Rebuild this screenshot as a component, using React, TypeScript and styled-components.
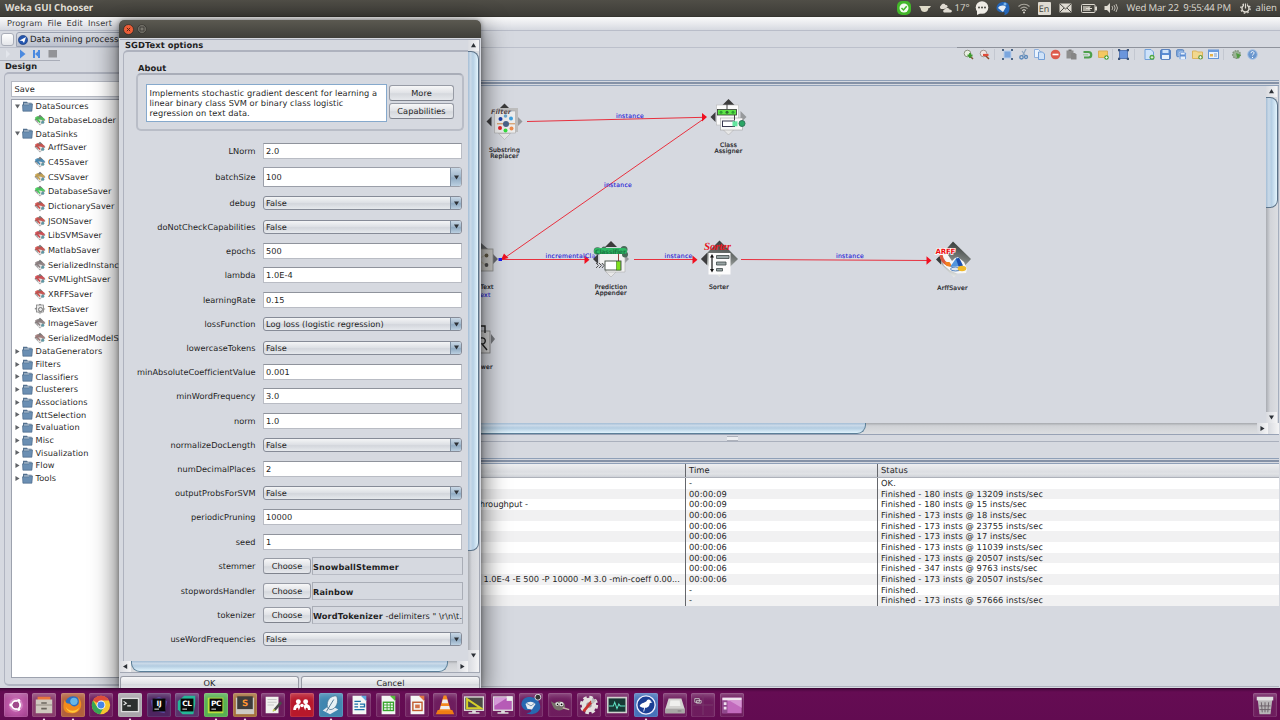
import React from "react";
import styled, { createGlobalStyle, css } from "styled-components";

const Global = createGlobalStyle`
  html, body { margin: 0; padding: 0; overflow: hidden; }
  * { box-sizing: border-box; }
  body { font: 8.2px/10px "DejaVu Sans", sans-serif; color: #1f1f1f; text-rendering: geometricPrecision; letter-spacing: 0.05px; }
  svg { display: block; flex: none; }
`;

const Screen = styled.div`
  position: relative; width: 1280px; height: 720px; display: flex; flex-direction: column;
  background: #d6d9e0; overflow: hidden; white-space: nowrap;
`;

/* ---------- desktop top panel ---------- */
const TopPanel = styled.header`
  height: 17px; flex: none; display: flex; align-items: center; justify-content: space-between;
  padding: 0 3px 0 5px; background: linear-gradient(#504e47, #3d3c37); border-bottom: 1px solid #35342f;
  color: #dfdbd2; font-family: "Open Sans", sans-serif; font-size: 9.6px; letter-spacing: 0;
`;
const PanelTitle = styled.div` font-weight: 700; font-size: 9.7px; letter-spacing: -0.05px; `;
const Indicators = styled.div` display: flex; align-items: center; height: 16px; `;
const Indicator = styled.span<{ $w: number }>`
  width: ${p => p.$w}px; flex: none; display: flex; align-items: center; gap: 2px;
`;
const Clock = styled.span` white-space: pre; letter-spacing: -0.18px; `;
const Lang = styled.span`
  width: 13px; height: 13px; background: #dfdbd2; color: #4a4943; border-radius: 1px;
  font-size: 9px; line-height: 13px; text-align: center;
`;

/* ---------- main window chrome ---------- */
const MenuBar = styled.nav`
  height: 14px; flex: none; display: flex; gap: 5px; padding: 1px 7px 0; color: #3b3b3b; letter-spacing: 0.12px;
  background: linear-gradient(#fafafa, #e9eaee 50%, #d6d9e0); border-bottom: 1px solid #b9bdc9;
`;
const TabRow = styled.div`
  height: 17px; flex: none; display: flex; align-items: center; gap: 2px; padding-left: 1px;
  border-bottom: 1px solid #bcc0cb;
`;
const CornerButton = styled.div`
  width: 13px; height: 13px; margin-top: 1px; background: linear-gradient(#fff, #e4e6ea); border: 1px solid #a9adb8; border-radius: 3px;
`;
const Tab = styled.div`
  height: 15px; width: 400px; display: flex; align-items: center; gap: 2px; padding-left: 1px; padding-top: 2px; font-size: 8.5px;
  background: linear-gradient(#d9dce3, #bcc1ce); border: 1px solid #9ca3b3; border-radius: 3px 0 0 0;
`;
const ToolRow = styled.div` height: 32px; flex: none; display: flex; align-items: flex-start; justify-content: space-between; `;
const PlayTools = styled.div`
  width: 60px; height: 13px; display: flex; align-items: center; border-bottom: 1px solid #a9adb8; padding-left: 5px;
`;
const EditTools = styled.div`
  width: 323px; height: 14px; display: flex; align-items: center; padding-left: 3px; margin-top: -1px;
  border-top: 1px solid #8f939c;
`;
const ToolCell = styled.span` width: 16px; height: 13px; display: grid; place-items: center; `;
const ToolGap = styled.span<{ $w: number }>`
  width: ${p => p.$w}px; height: 11px; background: linear-gradient(#c3c7d0, #c3c7d0) 30% 0 / 1px 100% no-repeat;
`;
const Body = styled.div` height: 608px; flex: none; display: flex; `;

/* ---------- design sidebar ---------- */
const Sidebar = styled.aside` width: 120px; flex: none; display: flex; flex-direction: column; margin-top: -19px; `;
const SideTitle = styled.div` font-weight: 700; padding-left: 5px; height: 11px; line-height: 10px; `;
const SideGroup = styled.div`
  flex: none; height: 614px; margin-left: 4px; padding: 7px 0 6px 6px; border: 1px solid #b1b5c1; border-width: 2px 0 2px 1px;
  border-radius: 5px 0 0 5px; display: flex; flex-direction: column; gap: 2px;
`;
const Search = styled.div`
  height: 16px; flex: none; background: #fff; border: 1px solid #b5b9c3; padding: 2px 2.5px; border-right: 0;
`;
const Tree = styled.div` flex: 1; background: #fff; border: 1px solid #9da2ae; border-right: 0; overflow: hidden; `;
const Folder = styled.div`
  height: 12.67px; display: flex; align-items: center; padding-left: 2.5px; gap: 2.5px; color: #2b2b2b; letter-spacing: 0.1px;
  & > svg:first-child { opacity: 0.75; }
`;
const Leaf = styled.div`
  height: 14.67px; display: flex; align-items: center; padding-left: 21.5px; gap: 2.5px; color: #2b2b2b; letter-spacing: 0.06px;
`;

/* ---------- flow canvas ---------- */
const Content = styled.main` flex: 1; min-width: 0; display: flex; flex-direction: column; padding-right: 1px; `;
const Rule = styled.div`
  height: 6px; flex: none; border-top: 1px solid #8fa0b8; border-bottom: 1px solid #8fa0b8;
  background: linear-gradient(#d6d9e0 1px, #8592a7 1px, #8592a7 3px, #d6d9e0 3px);
`;
const CanvasRow = styled.div` height: 337px; flex: none; display: flex; border-right: 1px solid #a5aebd; `;
const VBar = styled.div<{ $w: number }>`
  width: ${p => p.$w}px; flex: none; display: flex; flex-direction: column; background: linear-gradient(90deg, #a9acb2, #d2d4d9 35%, #dcdee2);
`;
const VThumb = styled.div<{ $h: number }>`
  height: ${p => p.$h}px; border: 1px solid #5b7288; border-left: 0; border-radius: 0 8px 8px 0;
  background: linear-gradient(90deg, #a4bdd5, #c9d9e8 25%, #b6cfe4 50%, #e3f4fd);
`;
const ArrowBox = styled.div`
  width: 11px; height: 11px; flex: none; background: linear-gradient(90deg, #d9dbe0, #f4f4f5); display: grid; place-items: center;
`;
const Spacer = styled.div` flex: 1; `;
const HBar = styled.div`
  height: 11px; flex: none; display: flex; align-items: stretch; background: linear-gradient(#a5a8ad, #cfd1d5 25%, #dcdee1);
`;
const HThumb = styled.div<{ $w: number; $both?: boolean }>`
  width: ${p => p.$w}px; border: 1px solid #5b7f98; border-top: 0;
  border-radius: ${p => (p.$both ? "0 0 9px 9px" : "0 0 9px 0")};
  background: linear-gradient(#a4bdd5, #c9d9e8 25%, #b3cce1 50%, #e0f3fc);
`;
const Splitter = styled.div`
  height: 8px; flex: none; border-top: 1px solid #98a2b5; border-bottom: 1px solid #aab0bd; display: flex; padding: 1px 0 0 607px;
  &::after { content: ""; width: 11px; height: 3px; border: solid #adb1bb; border-width: 1px 0; background: #eceef1; }
`;
const StatusHead = styled.div` height: 16px; flex: none; `;

/* ---------- status table ---------- */
const Table = styled.div` flex: none; display: flex; flex-direction: column; `;
const Row = styled.div<{ $odd?: boolean; $head?: boolean }>`
  display: grid; grid-template-columns: 565.5px 192px 1fr; height: 10.67px; line-height: 10.3px;
  background: ${p => (p.$odd ? "#f1f1f2" : "#ffffff")}; font-size: 8.3px; letter-spacing: 0.08px;
  ${p => p.$head && css`
    height: 14px; line-height: 12px; background: linear-gradient(#eeeff1, #dcdee2 60%, #e1e3e6 75%, #cfd2d8);
    border-bottom: 1px solid #aeb2ba;
  `}
`;
const Cell = styled.div`
  border-right: 1px solid #65676c; padding-left: 3.5px; overflow: hidden;
  &:last-child { border-right: 0; }
`;
const Task = styled(Cell)` padding-left: 0; padding-right: 5px; display: flex; `;
const TaskText = styled.span<{ $left: number }>` padding-left: ${p => p.$left}px; letter-spacing: -0.04px; `;
const Remaining = styled.div` height: 81.5px; flex: none; border-bottom: 1px solid #b0b4bf; `;

/* ---------- options dialog ---------- */
const Dialog = styled.section`
  position: absolute; left: 119px; top: 20px; width: 362px; height: 668px; display: flex; flex-direction: column;
  background: #d6d9e0; border-radius: 5px 5px 0 0; overflow: hidden; padding: 0 1px;
`;
const DialogShadow = styled.div`
  position: absolute; left: 119px; top: 20px; width: 362px; height: 668px; border-radius: 5px 5px 0 0;
  box-shadow: 0 0 5px rgba(0, 0, 0, 0.4), 0 8px 26px 2px rgba(0, 0, 0, 0.6);
`;
const DialogBar = styled.div`
  height: 18px; flex: none; background: linear-gradient(#5b5951, #3f3e39); display: flex; align-items: center;
  margin: 0 -1px; padding-left: 4px; gap: 2.5px;
`;
const ScrollPane = styled.div` height: 634px; flex: none; border: 1px solid #a3a8b4; border-left-width: 0; display: flex; flex-direction: column; margin-top: 1px; `;
const PaneTop = styled.div` display: flex; height: 621px; `;
const Form = styled.div` flex: 1; padding: 0 0 0 3px; `;
const Title = styled.div` height: 10px; line-height: 11px; font-weight: 700; padding-left: 2px; font-size: 8.35px; `;
const Group = styled.div`
  height: 611px; border: solid #aeb2be; border-width: 2px 0 0 1px; border-radius: 5px 0 0 0; padding: 10px 0 0 12px;
`;
const AboutTitle = styled.div` font-weight: 700; height: 11px; line-height: 12px; padding-left: 2px; font-size: 8.35px; `;
const AboutBox = styled.div`
  width: 328px; height: 58px; border: 2px solid #b9bdc7; border-top-color: #a9adb8; border-radius: 5px; padding: 9px 8px; display: flex; gap: 2px;
`;
const Description = styled.div`
  width: 241px; height: 38px; background: #fff; border: 1.5px solid #86a9cc; padding: 3px 2.5px; white-space: pre; line-height: 10px; font-size: 8.25px;
  letter-spacing: 0.07px;
`;
const ButtonStack = styled.div` display: flex; flex-direction: column; gap: 2.5px; padding-top: 0.5px; `;
const Button = styled.div<{ $w: number; $h: number }>`
  width: ${p => p.$w}px; height: ${p => p.$h}px; line-height: ${p => p.$h - 2}px; flex: none; text-align: center; border: 1px solid #979ba5; border-bottom-color: #7f838d;
  border-radius: 3px; background: linear-gradient(#f7f7f8, #e0e2e6 50%, #d5d8dd 55%, #e6e8ec);
`;
const Fields = styled.div` padding-top: 7.9px; `;
const Field = styled.div<{ $h: number }>` height: ${p => p.$h}px; display: flex; align-items: center; `;
const Label = styled.label` width: 119.5px; text-align: right; margin-right: 7.5px; flex: none; letter-spacing: 0.03px; `;
const Input = styled.div`
  width: 199px; height: 16px; line-height: 14px; background: #fff; border: 1px solid #b9bcc4; border-top-color: #8f939c; padding-left: 2px;
`;
const Combo = styled.div<{ $editable?: boolean }>`
  width: 199px; height: 14px; display: flex; justify-content: space-between; line-height: 12px; padding-left: 2px;
  border: 1px solid #868b97; border-radius: 3px; background: linear-gradient(#f4f5f6, #dcdfe4 50%, #d3d6dc 55%, #e6e9ed); overflow: hidden;
  ${p => p.$editable && css`height: 20px; line-height: 18px; background: #fff; border-color: #9b9fa9; border-radius: 0 3px 3px 0;`}
`;
const Drop = styled.div`
  width: 11px; border-left: 1px solid #7d8fa3; background: linear-gradient(#c9d8e6, #9fb6cb 50%, #8faac2 55%, #bcd0e1);
  display: grid; place-items: center;
`;
const Chosen = styled.div`
  width: 151px; height: 18px; line-height: 18px; margin-left: 1px; border: 1px solid #a9adb6; border-bottom-color: #b9bcc5; overflow: hidden;
  b { letter-spacing: 0.13px; }
`;
const DialogButtons = styled.div` display: flex; gap: 2px; padding-top: 3px; height: 15px; overflow: hidden; `;

/* ---------- dock ---------- */
const Dock = styled.footer`
  height: 32px; flex: none; position: relative; z-index: 1; display: flex; align-items: flex-start; gap: 4.67px; padding: 4px 3.5px 0;
  background: linear-gradient(#4c0840, #650c53 3px, #620b51); border-top: 1px solid #3f0636; margin-top: auto;
`;
const Tile = styled.div<{ $bg: string; $run?: boolean }>`
  width: 24px; height: 24px; flex: none; position: relative; border-radius: 2px; display: grid; place-items: center; background: ${p => p.$bg};
  box-shadow: inset 0 0 0 0.6px rgba(255, 255, 255, 0.16), inset 0 5px 6px -3px rgba(255, 255, 255, 0.3);
  ${p => p.$run && css`
    &::after { content: ""; position: absolute; left: 10px; bottom: -4px; border: 2px solid transparent; border-bottom: 3px solid #f0e6ee; border-top: 0; }
  `}
`;
const Push = styled.div` flex: 1; `;

const Arrow = ({ dir }: { dir: "up" | "down" | "left" | "right" }) => {
  const d = { up: "M0 5 3 0 6 5Z", down: "M0 .5 6 .5 3 5.5Z", left: "M5 0 5 6 0 3Z", right: "M.5 0 5.5 3 .5 6Z" }[dir];
  return <svg width="5" height="5" viewBox="0 0 6 6"><path d={d} fill="#2c3036" /></svg>;
};

const FolderIcon = () => (
  <svg width="11" height="11" viewBox="0 0 11 11">
    <path d="M1 .8h4l.8 1H9.500V9H1z" fill="#54718f" /><path d="M2 2.500h7v5H2z" fill="#d6e2ec" />
    <path d="M.5 3.800h6l1-.9h3L9.900 10.200H.9z" fill="#6b8fb3" stroke="#41607f" strokeWidth=".6" />
  </svg>
);

const LeafIcon = ({ c, kind }: { c: string; kind?: string }) => (
  <svg width="12" height="12" viewBox="0 0 12 12">
    <path d="M6 .8 11.500 6 6 11.400.5 6Z" fill={kind === "text" ? "#c4c4c4" : "#a5a5a5"} />
    <path d="M6 .8 9 3.500 3 6 .5 6Z" fill="#6a6a6a" opacity=".7" />
    {kind === "text"
      ? <><rect x="2.5" y="2" width="7" height="7" fill="#e8e8e8" stroke="#777" strokeWidth=".7" /><circle cx="6.5" cy="6.5" r="2" fill="none" stroke="#777" /></>
      : <><path d="M1 3.600 3.500 2l2 1.500 2-1 3.300 2.500-.5 1.500L5 5.500l-3.500.5z" fill={c} opacity=".85" /><path d="M4 5.500 8 6 7 10.500 4 9.500z" fill="#eceeee" opacity=".9" />
        <circle cx="8.800" cy="8.200" r="1.500" fill="#5f97a4" /><path d="M3.500 5.500l2.500 3" stroke={c} strokeWidth="1.500" /></>}
  </svg>
);

const leaves: [string, string, string?][] = [
  ["ArffSaver", "#cf4a45"], ["C45Saver", "#3f87b5"], ["CSVSaver", "#c9a24a"], ["DatabaseSaver", "#3fce55"],
  ["DictionarySaver", "#cf4a45"], ["JSONSaver", "#cf4a45"], ["LibSVMSaver", "#d2444a"], ["MatlabSaver", "#cf4a45"],
  ["SerializedInstanc", "#8d7f80"], ["SVMLightSaver", "#d2444a"], ["XRFFSaver", "#cf4a45"], ["TextSaver", "#999", "text"],
  ["ImageSaver", "#8d7f80"], ["SerializedModelS", "#a07a78"],
];
const folders = ["DataGenerators", "Filters", "Classifiers", "Clusterers", "Associations", "AttSelection", "Evaluation", "Misc", "Visualization", "Flow", "Tools"];

const toolIcons: Record<string, React.ReactNode> = {
  zoomin: <><circle cx="4.500" cy="4.500" r="3.300" fill="#e9efe2" stroke="#8b927f" /><path d="M6.500 6.500 10 10" stroke="#7b5a38" strokeWidth="1.500" /><path d="M7 4v5M4.500 6.500h5" stroke="#3c9a2d" strokeWidth="1.800" /></>,
  zoomout: <><circle cx="4.500" cy="4.500" r="3.300" fill="#f1e5e2" stroke="#a39793" /><path d="M6.500 6.500 10 10" stroke="#8b4a28" strokeWidth="1.500" /><path d="M4 6h5.500" stroke="#e04b3a" strokeWidth="2.200" /></>,
  select: <><rect x="2" y="2" width="7" height="7" fill="#7ba6de" stroke="#b7cdea" /><path d="M0 0h2v2H0zM9 0h2v2H9zM0 9h2v2H0zM9 9h2v2H9z" fill="#4d6685" /></>,
  cut: <><path d="M8 0 4.500 7M4 2l3.500 5" stroke="#8ea6c0" strokeWidth="1.200" /><circle cx="3.500" cy="8.300" r="1.700" fill="none" stroke="#5a88ba" strokeWidth="1.400" /><circle cx="8" cy="8" r="1.500" fill="none" stroke="#5a88ba" strokeWidth="1.300" /></>,
  copy: <><path d="M.5.5h4l2 2v6h-6z" fill="#eaf3fd" stroke="#8fb1de" /><path d="M4.500 3h4l2 2v5.500h-6z" fill="#cfe2f8" stroke="#739fd6" /></>,
  del: <><circle cx="5.500" cy="5.500" r="4.800" fill="#dd5a4c" /><path d="M2.500 5.500h6" stroke="#fff" strokeWidth="1.600" /></>,
  paste: <><path d="M.5 1.500h7v8h-7z" fill="#8e8e8e" /><path d="M5 4h4l1.500 1.500V10.500H5z" fill="#868686" /><path d="M2.500.5h3v1.500h-3z" fill="#777" /></>,
  undo: <><path d="M1.500 3h5a2.500 2.500 0 0 1 0 5.500H2" fill="none" stroke="#4da04c" strokeWidth="2.200" /><path d="M1 5.800h5" stroke="#8cc78a" /></>,
  note: <><path d="M.5 2h9v6.500h-9z" fill="#f4c862" stroke="#d9ad58" /><circle cx="8.500" cy="8.500" r="2.300" fill="#4aa53b" /><path d="M8.500 7.200v2.600M7.200 8.500h2.600" stroke="#fff" strokeWidth=".8" /></>,
  grid: <><rect x="1.500" y="1.500" width="8" height="8" fill="#6a95dc" stroke="#5577b5" /><path d="M0 0h2.200v2.200H0zM8.800 0H11v2.200H8.800zM0 8.800h2.200V11H0zM8.800 8.800H11V11H8.800z" fill="#3c5479" /></>,
  newdoc: <><path d="M1 .5h6l2.500 2.500v7.500H1z" fill="#cfe3fa" stroke="#70a0da" /><circle cx="8" cy="8.300" r="2.500" fill="#4aa53b" /><path d="M8 6.900v2.800M6.600 8.300h2.800" stroke="#fff" strokeWidth=".8" /></>,
  save: <><rect x=".7" y=".7" width="9.600" height="9.600" rx="1" fill="#5c8dd3" stroke="#4674b8" /><path d="M2.500 1h6v3h-6z" fill="#cfe2f8" /><path d="M2 6h7v4H2z" fill="#eaf2fb" /></>,
  saveall: <><rect x=".7" y=".7" width="7" height="7" rx="1" fill="#83aadd" stroke="#5580be" /><rect x="3.200" y="3.200" width="7" height="7.300" rx="1" fill="#5c8dd3" stroke="#e4edf8" strokeWidth=".6" /><path d="M4.700 4h4v1.600h-4zM4.500 7.500h4.500v2.500H4.500z" fill="#e6effa" /></>,
  open: <><path d="M.5 2h4l1 1h5v6.500H.5z" fill="#f2d88e" stroke="#d9b35c" /><circle cx="8.500" cy="8.300" r="2.300" fill="#6a9f4b" /><path d="M8.500 7v2.600M7.200 8.300h2.600" stroke="#fff" strokeWidth=".8" /></>,
  palette: <><rect x=".5" y="1" width="10" height="8.500" fill="#eaf3fd" stroke="#6494d4" /><path d="M.5 1h10v2H.5z" fill="#6a9bdd" /><path d="M2 5h3v2.500H2z" fill="#e8b34a" /><path d="M6 5h3M6 7h3" stroke="#7f9cc5" /></>,
  gear: <><circle cx="5.500" cy="5.500" r="3.800" fill="#9bb396" stroke="#84937f" strokeDasharray="1.600 1" strokeWidth="1.500" /><path d="M5 4 10 6l-3.500 4z" fill="#4f9a3f" /></>,
  help: <><circle cx="5.500" cy="5.500" r="4.800" fill="#6b97ce" stroke="#a9c4e6" /><path d="M4 4.200c0-2.300 3.200-2 3 0-.1 1-1.500 1.200-1.500 2.300M5.500 8v1" stroke="#fff" fill="none" /></>,
};
const Tool = ({ n }: { n: string }) => <ToolCell><svg width="11" height="11" viewBox="0 0 11 11">{toolIcons[n]}</svg></ToolCell>;

const Diamond = ({ x, y }: { x: number; y: number }) => (
  <g>
    <path d={`M${x - 18} ${y}l5-5v10z`} fill="#3d3d3f" /><path d={`M${x + 18} ${y}l-6-6v12z`} fill="#97999c" />
    <path d={`M${x} ${y - 18}l6 6h-12z`} fill="#3b3b3b" /><path d={`M${x} ${y + 18}l6-6h-12z`} fill="#e8e8e8" stroke="#a5a5a5" strokeWidth=".5" />
  </g>
);
const NodeName = styled.text` font: 6.1px/1 "DejaVu Sans", sans-serif; letter-spacing: 0.22px; fill: #17171a; stroke: #17171a; stroke-width: 0.18px; text-anchor: middle; `;
const WireName = styled.text` font: 6.1px/1 "DejaVu Sans", sans-serif; letter-spacing: 0.28px; fill: #2418d6; stroke: #2418d6; stroke-width: 0.12px; `;

const Flow = () => (
  <svg width="1146" height="337" viewBox="120 86 1146 337">
    <defs>
      <linearGradient id="dia" x1="0.6" y1="0" x2="0.4" y2="1"><stop offset="0" stopColor="#353b38" /><stop offset=".5" stopColor="#7f8482" /><stop offset="1" stopColor="#eef0ef" /></linearGradient>
    </defs>
    <g stroke="#e8303e" strokeWidth="1" fill="none">
      <path d="M527 121.500 704 117.300M705 118 503 259M500 259.500H588M634 259.500H696M741 259.500 930 260.500" />
    </g>
    <g fill="#f01020">
      <path d="M702 113v8.500l5-4.500zM584.500 255.500v8.500l5-4.200zM692.500 255.500v8.500l5-4.200zM926.500 256.300v8.400l5-4.100zM504 253.500l4.500 4.500-7.500 2z" />
    </g>
    <rect x="498.500" y="258" width="3.500" height="3" fill="#1c1cf0" />

    <Diamond x={504.500} y={121.500} />
    <path d="M497 108h21v24h-21z" fill="#bdbdbd" /><path d="M494.500 111h21v22h-21z" fill="#ededed" stroke="#a9a9a9" strokeWidth=".6" />
    <g><circle cx="500.500" cy="119" r="2" fill="#1b3fa8" /><circle cx="511" cy="118.500" r="2" fill="#3da0dd" /><circle cx="505.500" cy="116" r="1.800" fill="#6ba8d2" /><path d="M497 123.800h18" stroke="#d08a4a" /><circle cx="506" cy="124" r="3" fill="#4a6489" /><circle cx="500" cy="128" r="2" fill="#e2262a" /><circle cx="505.500" cy="130.500" r="2" fill="#35dc3e" /><circle cx="511.500" cy="128.500" r="2" fill="#ec8a4b" /></g>
    <text x="491" y="113.500" fontFamily="DejaVu Sans" fontWeight="700" fontStyle="italic" fontSize="6.300" textLength="20" fill="#56484a">Filter</text>
    <NodeName x="504.500" y="151.800">Substring</NodeName><NodeName x="504.500" y="157.500">Replacer</NodeName>

    <Diamond x={728.500} y={117} />
    <rect x="716.500" y="105" width="22" height="20" fill="#fbfbfb" stroke="#b9b9b9" strokeWidth=".6" />
    <rect x="720.500" y="118" width="22" height="12" fill="#f8f8f8" stroke="#a0a0a0" strokeWidth=".6" />
    <rect x="717.500" y="109.500" width="19" height="5.500" fill="#5ee548" stroke="#333" strokeWidth=".8" />
    <circle cx="721" cy="112.300" r="1.500" fill="#2ca130" /><circle cx="727" cy="112.300" r="1.500" fill="#2c6a30" /><circle cx="733" cy="112.300" r="1.500" fill="#2ca130" />
    <path d="M727 103v6M734.500 115v5" stroke="#444" /><rect x="722.500" y="121" width="12" height="5.500" fill="#fff" stroke="#38384f" />
    <rect x="732.500" y="121.300" width="5" height="5" fill="#63e6a0" /><circle cx="742" cy="123.500" r="3" fill="#2aa665" stroke="#317558" />
    <NodeName x="728.500" y="146.500">Class</NodeName><NodeName x="728.500" y="152.700">Assigner</NodeName>

    <path d="M481 243l7 6h-7zM493 254l5 5-5 5z" fill="#66686c" />
    <rect x="474" y="249" width="19" height="22" fill="#c9c8c5" stroke="#8d8d8b" strokeWidth=".8" />
    <path d="M478 259l8-4M478 260l8 5" stroke="#bcb9a9" strokeWidth="1.200" /><circle cx="486.500" cy="255.500" r="1.900" fill="#615a45" /><circle cx="486.500" cy="265" r="1.900" fill="#4e4e4e" />
    <NodeName x="480" y="289">SGDText</NodeName><WireName x="477.500" y="297">text</WireName>

    <path d="M481 331l3 3h-3zM491 334l4 5-4 5z" fill="#75777b" /><rect x="472" y="331" width="18" height="22" fill="#d4d4d4" stroke="#7b7b7b" strokeWidth=".8" />
    <path d="M480 326h5v7M481 338c6-1 5 6 1 6l5 6" stroke="#222" strokeWidth="1.400" fill="none" />
    <NodeName x="475" y="368.500">TextViewer</NodeName>

    <Diamond x={611} y={259} />
    <path d="M599 250h26v22h-19v-8h-7z" fill="#f2f2f2" stroke="#b5b5b5" strokeWidth=".7" />
    <g fill="#4a6b59"><circle cx="597.500" cy="251" r="3.800" /><circle cx="604" cy="249" r="2.500" /><circle cx="624" cy="249.500" r="3.500" /><circle cx="625" cy="254.500" r="3" /></g>
    <rect x="594" y="248" width="33" height="6" rx="3" fill="#2fb865" />
    <text x="595" y="253.700" fontFamily="DejaVu Sans" fontWeight="700" fontSize="6.200" textLength="31" fill="#1c7a44">Classifier</text>
    <path d="M618.500 254v8" stroke="#944" /><rect x="605" y="261" width="16" height="9" fill="#fff" stroke="#3f4a3f" strokeWidth=".9" /><rect x="616.500" y="261.500" width="4" height="8.500" fill="#7fe11c" stroke="#3a7a16" strokeWidth=".6" />
    <path d="M596 263l2.500 2.500-2.500 2.500M599 263l2.500 2.500-2.500 2.500M602 263l2 2.500-2 2.500" stroke="#555" fill="none" />
    <NodeName x="611" y="289.300">Prediction</NodeName><NodeName x="611" y="295.200">Appender</NodeName>

    <path d="M719.500 240.500 738 259l-18.500 18L701 259Z" fill="url(#dia)" /><path d="M701 259l6-6v12z" fill="#3d3d3f" />
    <rect x="708.500" y="253" width="22" height="21.500" fill="#fcfcfc" />
    <path d="M712 256v14" stroke="#111" strokeWidth="1.200" /><path d="M710 257.500l2-3.500 2 3.500zM710 269l2 3.500 2-3.500z" fill="#111" />
    <g fill="#98a4a4" stroke="#3c4646" strokeWidth=".8"><path d="M716.500 255.500h12.500v3h-12.500zM716.500 262h9.500v3h-9.500zM716.500 268.500h6v2.500h-6z" /></g>
    <text x="704" y="250" fontFamily="Liberation Serif" fontWeight="700" fontStyle="italic" fontSize="11" textLength="27" fill="#e5161f">Sorter</text>
    <NodeName x="719" y="289.300">Sorter</NodeName>

    <path d="M953 241.500 971 259l-17 18.500-17-18Z" fill="url(#dia)" /><path d="M936 259.500l5-5v10z" fill="#383b3a" />
    <path d="M939 255l4-1 5 1 4 6 3-3 3-1 6 5 3 7-1 4-9 .5-7-3-6-5z" fill="#f7f7f7" />
    <path d="M941 255c1 6 4 9 9 10" stroke="#d9573f" strokeWidth="3.200" fill="none" /><path d="M944.500 262h5l3 5-6-1z" fill="#f2801e" />
    <path d="M950 267l7-10 3 9z" fill="#5295dd" /><path d="M956 259l3-1.500 4 8-4 2z" fill="#1b4fae" />
    <ellipse cx="955.500" cy="269" rx="5" ry="2" fill="#dce6f0" stroke="#2d66ae" strokeWidth=".8" /><ellipse cx="962" cy="268.500" rx="4.300" ry="2.800" fill="#f0b829" />
    <text x="935.500" y="254" fontFamily="DejaVu Sans" fontWeight="700" fontSize="7.200" textLength="20" stroke="#fff" strokeWidth="1.400" paintOrder="stroke" fill="#f00f12">ARFF</text>
    <NodeName x="952.500" y="290">ArffSaver</NodeName>

    <WireName x="616" y="118">instance</WireName><WireName x="604" y="186.800">instance</WireName>
    <WireName x="545.500" y="258">incrementalCl<tspan opacity=".7">a</tspan></WireName>
    <WireName x="664.500" y="258">instance</WireName><WireName x="836" y="258">instance</WireName>
  </svg>
);

const rows: [string, string, number][] = [
  ["-", "OK.", 0], ["00:00:09", "Finished - 180 insts @ 13209 insts/sec", 0], ["00:00:09", "Finished - 180 insts @ 15 insts/sec", 1],
  ["00:00:06", "Finished - 173 insts @ 18 insts/sec", 0], ["00:00:06", "Finished - 173 insts @ 23755 insts/sec", 0],
  ["00:00:06", "Finished - 173 insts @ 17 insts/sec", 0], ["00:00:06", "Finished - 173 insts @ 11039 insts/sec", 0],
  ["00:00:06", "Finished - 173 insts @ 20507 insts/sec", 0], ["00:00:06", "Finished - 347 insts @ 9763 insts/sec", 0],
  ["00:00:06", "Finished - 173 insts @ 20507 insts/sec", 2], ["-", "Finished.", 0], ["-", "Finished - 173 insts @ 57666 insts/sec", 0],
];

type F = { l: string; v: string; k: "t" | "c" | "e" | "o"; extra?: string };
const fields: F[] = [
  { l: "LNorm", v: "2.0", k: "t" }, { l: "batchSize", v: "100", k: "e" }, { l: "debug", v: "False", k: "c" },
  { l: "doNotCheckCapabilities", v: "False", k: "c" }, { l: "epochs", v: "500", k: "t" }, { l: "lambda", v: "1.0E-4", k: "t" },
  { l: "learningRate", v: "0.15", k: "t" }, { l: "lossFunction", v: "Log loss (logistic regression)", k: "c" },
  { l: "lowercaseTokens", v: "False", k: "c" }, { l: "minAbsoluteCoefficientValue", v: "0.001", k: "t" },
  { l: "minWordFrequency", v: "3.0", k: "t" }, { l: "norm", v: "1.0", k: "t" }, { l: "normalizeDocLength", v: "False", k: "c" },
  { l: "numDecimalPlaces", v: "2", k: "t" }, { l: "outputProbsForSVM", v: "False", k: "c" }, { l: "periodicPruning", v: "10000", k: "t" },
  { l: "seed", v: "1", k: "t" }, { l: "stemmer", v: "SnowballStemmer", k: "o" }, { l: "stopwordsHandler", v: "Rainbow", k: "o" },
  { l: "tokenizer", v: "WordTokenizer", k: "o", extra: ' -delimiters " \\r\\n\\t.' }, { l: "useWordFrequencies", v: "False", k: "c" },
];
const rowHeight = { t: 24.6, c: 23.5, e: 28, o: 24.6 };

const doc = (c: string, inner: React.ReactNode) => <><path d="M5 2h10l5 5v15H5z" fill="#f4f6f4" /><path d="M14 2h6v6z" fill={c} />{inner}</>;
const ide = (t: string, bg: React.ReactNode) => <>{bg}<rect x="5" y="5" width="14" height="14" fill="#080808" /><text x="12" y="13" textAnchor="middle" letterSpacing="-0.3" fontFamily="DejaVu Sans" fontWeight="700" fontSize="8" fill="#fff">{t}</text><path d="M7 16.500h5" stroke="#fff" /></>;
const plum = "rgba(255,255,255,.07)";
const dock: { bg: string; run?: boolean; art: React.ReactNode }[] = [
  { bg: "radial-gradient(#d76fc0, #9c3b87)", art: <><circle cx="12" cy="12" r="7.500" fill="#fff" opacity=".25" /><circle cx="12" cy="12" r="4.500" fill="#a04a8c" stroke="#fff" strokeWidth="2" /><path d="M12 12H5M12 12l4-7M12 12l4 7" stroke="#a04a8c" strokeWidth="1" /><circle cx="12" cy="12" r="3" fill="#a04a8c" /><circle cx="6.300" cy="12" r="1.600" fill="#fff" /><circle cx="15" cy="7" r="1.600" fill="#fff" /><circle cx="15" cy="17" r="1.600" fill="#fff" /></> },
  { bg: "rgba(210,150,160,.35)", run: true, art: <><path d="M5 3h14v6H5z" fill="#e9763c" /><path d="M3 6h18v15H3z" fill="#cfc9bf" /><path d="M3 12h18" stroke="#8c867c" /><path d="M9 9h6v1.500H9zM9 15h6v2H9z" fill="#6b665e" /></> },
  { bg: "#b2603c", run: true, art: <><circle cx="12" cy="11" r="8.500" fill="#2c6fc0" /><circle cx="13" cy="8" r="4" fill="#67b7e6" /><path d="M3 6c1 5 4 4 6 5 2 3 6 4 9 0 1-3 0-6-1-8 6 4 6 17-5 18S0 15 3 6Z" fill="#f28a1c" /><path d="M4 14c3 5 10 6 15 1-3 7-12 8-15-1Z" fill="#ffc83a" /></> },
  { bg: plum, art: <><circle cx="12" cy="12" r="10" fill="#f5c52f" /><path d="M12 12 3.300 7A10 10 0 0 1 20.700 7H12Z" fill="#dd4b3b" /><path d="M3.300 7A10 10 0 0 0 11 22l4-7.500L7 13Z" fill="#37a555" /><circle cx="12" cy="12" r="4.800" fill="#fff" /><circle cx="12" cy="12" r="3.800" fill="#4584e8" /></> },
  { bg: "#a9a5aa", run: true, art: <><rect x="2" y="4" width="20" height="16" rx="1" fill="#ddd" /><rect x="3.500" y="5.500" width="17" height="13" fill="#2c302e" /><path d="M5 8l3 2-3 2M9 13h4" stroke="#eee" fill="none" strokeWidth="1.200" /></> },
  { bg: "#4d2460", art: ide("IJ", <path d="M3 7 12 3l9 5-3 13-13-3z" fill="#5b4aa0" />) },
  { bg: "rgba(80,120,160,.35)", art: ide("CL", <path d="M2 8 9 2h12v9l-2 11H7l-5-5z" fill="#25b796" />) },
  { bg: "#58b052", run: true, art: ide("PC", <path d="M3 4h17v17H3z" fill="#b9df3e" />) },
  { bg: "#a56f3b", run: true, art: <><path d="M2 4h20v18H2z" fill="#cdc9c4" /><path d="M3.500 2.500h17v14h-17z" fill="#3e3c3b" /><text x="8.700" y="13" fontFamily="DejaVu Sans" fontWeight="700" fontSize="9.500" fill="#ff9533">S</text></> },
  { bg: plum, art: <><rect x="4" y="3" width="14" height="18" fill="#f1f1ee" /><path d="M6 6h10M6 9h10M6 12h7" stroke="#bbb" strokeWidth=".8" /><path d="M13 16l7-8 2 2-7 8-3 1z" fill="#4a4b4a" /><path d="M11 19l2-3 2 2z" fill="#c9d44a" /></> },
  { bg: "#b8182b", art: <path d="M4 17v-5c0-4 5-4 6 0 1-4 1-4 2-2 1-2 1-2 2 2 1-4 6-4 6 0v5" stroke="#fff" strokeWidth="0" fill="none" /> },
  { bg: "#3f86b0", run: true, art: <><path d="M3 18 11 12l9 5-9 5z" fill="#e3eaf0" /><path d="M8 14C7 7 11 2 18 2c3 6 0 14-6 15-2 0-3-1-4-3Z" fill="#e8f1f5" stroke="#45708d" strokeWidth=".8" /><path d="M7 19 15 6" stroke="#45708d" /></> },
  { bg: plum, art: doc("#5fa9dc", <path d="M7 8h7M7 11h4M13 11h5v3h-5M7 14h4M7 17h11" stroke="#1a6fa8" strokeWidth="1.500" fill="none" />) },
  { bg: plum, art: doc("#57bd3b", <><rect x="7" y="9" width="11" height="9" fill="none" stroke="#36a32a" strokeWidth="1.500" /><path d="M7 12h11M7 15h11M11 9v9M14.500 9v9" stroke="#36a32a" /></>) },
  { bg: plum, art: doc("#e07544", <><rect x="7.500" y="9" width="10" height="9" fill="none" stroke="#c05a2c" strokeWidth="1.500" /><rect x="10" y="11.500" width="5" height="4" fill="#d3734a" /></>) },
  { bg: plum, art: <><path d="M4 17.500h16l2 4.500H2z" fill="#ef7d14" /><path d="M10.500 1.500h3l5 17h-13z" fill="#f58a1f" /><path d="M9.500 6h5l1 4h-7zM7.500 13h9l1 3.500H6.500z" fill="#eef0f0" /></> },
  { bg: plum, art: <><rect x="1" y="2.500" width="22" height="16" fill="#dcdcd8" /><rect x="2.500" y="4" width="19" height="13" fill="#4b4a46" /><path d="M4.500 5.500v10h15z" fill="none" stroke="#d5cf2a" strokeWidth="2.200" /><path d="M10 18h4v2h4v1.500H6V20h4z" fill="#ddd" /></> },
  { bg: plum, art: <><rect x="1" y="2.500" width="22" height="16" fill="#dcd8dc" /><rect x="2.500" y="4" width="19" height="13" fill="#b65bb6" /><path d="M2.500 4h14l-14 9z" fill="#d59ad7" /><rect x="16" y="2.500" width="6" height="5" fill="#eee" /><path d="M10 18h4v2h4v1.500H6V20h4z" fill="#ddd" /></> },
  { bg: plum, art: <><path d="M1.500 12C1.500 5 7 2.500 13 3.500c6 .5 10 7 9 12-2 6-10 8-15 5.500 4 0 6-2 5-4-5 2-9 0-10.500-5Z" fill="#2768b0" /><path d="M6 11c3-4 9-3 11 0l-4 6-5-1z" fill="#e7edf2" /><path d="M7 10l5 3 4-3" stroke="#6d8ba8" fill="none" /><circle cx="19.500" cy="3.500" r="3.200" fill="#333" stroke="#e6e6e6" /></> },
  { bg: plum, art: <><path d="M2 8l4 2c4-3 9-3 11 1 2 4-2 7-6 7-5 0-7-4-9-10Z" fill="#77706a" /><circle cx="9" cy="11" r="2" fill="#eee" /><circle cx="13.500" cy="11" r="2.400" fill="#eee" /><circle cx="9.300" cy="11.300" r=".9" /><circle cx="13.700" cy="11.300" r="1" /><path d="M15 15l7 2" stroke="#c2b5a5" strokeWidth="1.500" /></> },
  { bg: plum, art: <><circle cx="12" cy="12" r="8" fill="#e3e0de" stroke="#e3e0de" strokeWidth="4" strokeDasharray="3.600 2.700" /><circle cx="12" cy="12" r="3" fill="#9c8f96" /><path d="M6 19 15 8" stroke="#c8312f" strokeWidth="3" /><path d="M14 9l2-5 4 3-4 4z" fill="#bbb" /></> },
  { bg: plum, art: <><rect x="1" y="3" width="22" height="18" fill="#d1d1cf" /><rect x="2.800" y="4.800" width="18.400" height="14.500" fill="#173934" /><path d="M3 13h5l1.500-4 2.500 7 2-5 1.500 2H21" stroke="#5fe0c2" fill="none" strokeWidth="1.100" /></> },
  { bg: "#4672ba", run: true, art: <><circle cx="12" cy="12" r="10" fill="#1c3f94" stroke="#eef" strokeWidth="1.500" /><path d="M5 13c2-4 6-3 8-6 1-2 5-1 4 1l2 1-3 1c0 4-3 5-5 5l-1 4H9l1-4c-2 0-4-1-5-2Z" fill="#fff" /></> },
  { bg: plum, art: <><path d="M5 5h14l3.500 11v5h-21v-5z" fill="#d3d2d0" /><path d="M1.500 16h21v5h-21z" fill="#a9a7a6" /><path d="M7 7h10l1 6H6z" fill="#efefed" /><path d="M15 18.500h4" stroke="#777" /></> },
  { bg: plum, art: <><path d="M12 1v22M1 12h22" stroke="#7a3a6c" /><path d="M3 5h5v4H3zM5 7h5v3H5z" fill="#5a2a50" stroke="#ddd" strokeWidth=".8" /></> },
  { bg: plum, art: <><rect x="1.500" y="4" width="21" height="17" fill="#c26abd" /><path d="M1.500 4h21v3h-21z" fill="#efe6ee" /><path d="M1.500 7H7v14H1.500z" fill="#8f4a8c" /><path d="M3 9h3v3H3zM3 14h3v3H3z" fill="#efe0ee" /><path d="M9 7h13.500v8z" fill="#d795d4" /></> },
];
dock[10].art = (
  <g fill="#fff">
    <circle cx="8" cy="8.500" r="2.700" /><circle cx="16" cy="8.500" r="2.700" /><circle cx="12" cy="12.500" r="2" />
    <path d="M2.500 17.500c0-4 2-6.500 5-6.500 2 0 2.500 2 2.500 3.500L8.500 18c-.5-1.500-.5-3-1.500-3s-1.500 1-1.500 2.500zM21.500 17.500c0-4-2-6.500-5-6.500-2 0-2.500 2-2.500 3.500l1.500 3.500c.5-1.500.5-3 1.500-3s1.500 1 1.500 2.500z" />
  </g>
);

const App = () => (
  <>
    <Global />
    <Screen>
      <TopPanel>
        <PanelTitle>Weka GUI Chooser</PanelTitle>
        <Indicators>
          <Indicator $w={21}><svg width="14" height="14" viewBox="0 0 14 14"><rect width="14" height="14" rx="5" fill="#43b72a" /><circle cx="7" cy="7" r="4.500" fill="#f3fbef" /><path d="M4.500 7l2 2 3.200-3.800" stroke="#43b72a" strokeWidth="1.500" fill="none" /></svg></Indicator>
          <Indicator $w={21}><svg width="14" height="12" viewBox="0 0 14 12"><path d="M1 4h12l-1.500 2h-1C10 9 8.500 10 6.500 10S3 9 2.500 6z" fill="#dfdbc9" /></svg></Indicator>
          <Indicator $w={36}><svg width="14" height="12" viewBox="0 0 14 12"><path d="M2 7a2 2 0 0 1 0-3.500C3 1 6 1.500 6.500 3 9 3 9 5 8 5.500L5 7zM5 10.500a1.600 1.600 0 0 1 .5-3C6.500 5.500 10 5.500 10.500 7.500c3 0 3 3 1 3z" fill="#dfdbd2" /></svg>17°</Indicator>
          <Indicator $w={21}><svg width="14" height="14" viewBox="0 0 14 14"><circle cx="7" cy="6.500" r="6.300" fill="#efece6" /><path d="M2 9v5l4-2z" fill="#efece6" /><g fill="#4a4943"><circle cx="4" cy="6.500" r="1" /><circle cx="7" cy="6.500" r="1" /><circle cx="10" cy="6.500" r="1" /></g></svg></Indicator>
          <Indicator $w={22}><svg width="14" height="14" viewBox="0 0 14 14"><path d="M.5 7C1 1 8-.5 12 2.500c3 5 1 11-4 11.500 1-1 1-2 0-3C4 12 .5 10 .5 7Z" fill="#2566b8" /><path d="M2 7c2-3 6-3 8-1l-3 5z" fill="#e9eef3" /><circle cx="9" cy="3" r="1.500" fill="#7fb6e8" /></svg></Indicator>
          <Indicator $w={20}><svg width="12" height="12" viewBox="0 0 12 12"><g fill="none" stroke="#a9a69d" strokeWidth="1.100"><path d="M.5 4.500c3.200-3 7.800-3 11 0M2.500 6.700c2-1.800 5-1.800 7 0" /><path d="M4.200 8.600c1-.9 2.600-.9 3.600 0" stroke="#dfdbd2" /></g><circle cx="6" cy="10.500" r="1" fill="#dfdbd2" /></svg></Indicator>
          <Indicator $w={21}><Lang>En</Lang></Indicator>
          <Indicator $w={22}><svg width="13" height="10" viewBox="0 0 13 10"><rect x=".5" y=".5" width="12" height="9" fill="#dfdbd2" /><path d="M.5.5 6.500 6l6-5.500M.5 9.500 5 5M12.500 9.500 8 5" stroke="#4a4943" fill="none" /></svg></Indicator>
          <Indicator $w={23}><svg width="16" height="9" viewBox="0 0 16 9"><rect x=".5" y=".5" width="13.500" height="8" rx="1" fill="none" stroke="#dfdbd2" /><path d="M2 2h8l-2 2.500L10 7H2z" fill="#aaa79e" /><path d="M5 4.500h6M8 3v3M14.500 3H16v3h-1.500z" stroke="#dfdbd2" fill="#dfdbd2" /></svg></Indicator>
          <Indicator $w={23}><svg width="14" height="12" viewBox="0 0 14 12"><path d="M.5 4H3l3-3v10L3 8H.5z" fill="#dfdbd2" /><path d="M8 4q1.500 2 0 4M10 3q2.300 3 0 6M12 2q3 4 0 8" stroke="#bbb8af" fill="none" /></svg></Indicator>
          <Indicator $w={113}><Clock>Wed Mar 22  9:55:44 PM</Clock></Indicator>
          <Indicator $w={16}><svg width="11" height="11" viewBox="0 0 11 11"><circle cx="5.500" cy="5.500" r="3.500" fill="none" stroke="#dfdbd2" strokeWidth="1.400" /><circle cx="5.500" cy="5.500" r="4.700" fill="none" stroke="#dfdbd2" strokeWidth="1.300" strokeDasharray="1.600 2.100" /><path d="M5.500 0v5" stroke="#45443f" strokeWidth="3" /><path d="M5.500 .5v5" stroke="#dfdbd2" strokeWidth="1.200" /></svg></Indicator>
          <span>alien</span>
        </Indicators>
      </TopPanel>
      <MenuBar><span>Program</span><span>File</span><span>Edit</span><span>Insert</span></MenuBar>
      <TabRow>
        <CornerButton />
        <Tab>
          <svg width="10" height="10" viewBox="0 0 10 10"><circle cx="5" cy="5" r="4.600" fill="#2455ad" stroke="#16387b" strokeWidth=".6" /><path d="M1.500 5.500 8 2 6 8 4.500 6z" fill="#fff" /></svg>
          Data mining processes
        </Tab>
      </TabRow>
      <ToolRow>
        <PlayTools>
          <svg width="52" height="10" viewBox="0 0 52 10"><path d="M1 1l4 4-4 4z" fill="#e3e6ec" /><path d="M15 .5 20.500 5 15 9.500z" fill="#4b8ae0" /><path d="M28 1h2v8h-2zM34.500 1v8L30 5zM33 1h2v8h-2z" fill="#4b8ae0" /><path d="M43.500 1H52v7.500h-8.500z" fill="#929397" /></svg>
        </PlayTools>
        <EditTools>
          <Tool n="zoomin" /><Tool n="zoomout" /><ToolGap $w={7.500} />
          <Tool n="select" /><Tool n="cut" /><Tool n="copy" /><Tool n="del" /><Tool n="paste" /><Tool n="undo" /><Tool n="note" /><ToolGap $w={3.500} />
          <Tool n="grid" /><ToolGap $w={10} />
          <Tool n="newdoc" /><Tool n="save" /><Tool n="saveall" /><Tool n="open" /><Tool n="palette" /><ToolGap $w={7} />
          <Tool n="gear" /><Tool n="help" />
        </EditTools>
      </ToolRow>
      <Body>
        <Sidebar>
          <SideTitle>Design</SideTitle>
          <SideGroup>
            <Search>Save</Search>
            <Tree>
              <Folder><Arrow dir="down" /><FolderIcon />DataSources</Folder>
              <Leaf><LeafIcon c="#43bf4c" />DatabaseLoader</Leaf>
              <Folder><Arrow dir="down" /><FolderIcon />DataSinks</Folder>
              {leaves.map(([n, c, k]) => <Leaf key={n}><LeafIcon c={c} kind={k} />{n}</Leaf>)}
              {folders.map(n => <Folder key={n}><Arrow dir="right" /><FolderIcon />{n}</Folder>)}
            </Tree>
          </SideGroup>
        </Sidebar>
        <Content>
          <Rule />
          <CanvasRow>
            <Flow />
            <VBar $w={12}>
              <ArrowBox><Arrow dir="up" /></ArrowBox><VThumb $h={111} /><Spacer /><ArrowBox><Arrow dir="down" /></ArrowBox>
            </VBar>
          </CanvasRow>
          <HBar><HThumb $w={745.500} /><Spacer /><ArrowBox><Arrow dir="right" /></ArrowBox><ArrowBox /></HBar>
          <Splitter />
          <StatusHead />
          <Rule />
          <Table>
            <Row $head><Cell /><Cell>Time</Cell><Cell>Status</Cell></Row>
            {rows.map(([t, s, task], i) => (
              <Row key={i} $odd={i % 2 === 1}>
                <Task>
                  {task === 1 && <TaskText $left={356.500}>throughput -</TaskText>}
                  {task === 2 && <TaskText $left={363.500}>1.0E-4 -E 500 -P 10000 -M 3.0 -min-coeff 0.00...</TaskText>}
                </Task>
                <Cell>{t}</Cell><Cell>{s}</Cell>
              </Row>
            ))}
          </Table>
          <Remaining />
        </Content>
      </Body>
      <Dock>
        {dock.map((d, i) => <Tile key={i} $bg={d.bg} $run={d.run}><svg width="22" height="22" viewBox="0 0 24 24">{d.art}</svg></Tile>)}
        <Push />
        <Tile $bg={plum}><svg width="22" height="22" viewBox="0 0 24 24"><path d="M4 6h16l-2 16H6z" fill="#b9b6b8" /><path d="M3 3h18v4H3z" fill="#e2e0e1" /><path d="M8 9l1 11M12 9v11M16 9l-1 11M6 13h12M6 17h12" stroke="#6a5f68" /></svg></Tile>
      </Dock>

      <DialogShadow />
      <Dialog>
        <DialogBar>
          <svg width="11" height="11" viewBox="0 0 11 11"><circle cx="5.500" cy="5.500" r="5" fill="#ee5f38" stroke="#2f2d29" strokeWidth=".8" /><path d="M3.800 3.800l3.400 3.400M7.200 3.800 3.800 7.200" stroke="#5b2413" /></svg>
          <svg width="10" height="10" viewBox="0 0 10 10"><circle cx="5" cy="5" r="4.400" fill="#7b7970" stroke="#35342f" strokeWidth=".8" /><rect x="3" y="3" width="4" height="4" fill="none" stroke="#3c3b36" /></svg>
        </DialogBar>
        <ScrollPane>
          <PaneTop>
            <Form>
              <Title>SGDText options</Title>
              <Group>
                <AboutTitle>About</AboutTitle>
                <AboutBox>
                  <Description>{"Implements stochastic gradient descent for learning a\nlinear binary class SVM or binary class logistic\nregression on text data."}</Description>
                  <ButtonStack><Button $w={65} $h={16}>More</Button><Button $w={65} $h={16}>Capabilities</Button></ButtonStack>
                </AboutBox>
                <Fields>
                  {fields.map(f => (
                    <Field key={f.l} $h={rowHeight[f.k]}>
                      <Label>{f.l}</Label>
                      {f.k === "t" && <Input>{f.v}</Input>}
                      {(f.k === "c" || f.k === "e") && <Combo $editable={f.k === "e"}><span>{f.v}</span><Drop><Arrow dir="down" /></Drop></Combo>}
                      {f.k === "o" && <><Button $w={48} $h={16}>Choose</Button><Chosen><b>{f.v}</b>{f.extra}</Chosen></>}
                    </Field>
                  ))}
                </Fields>
              </Group>
            </Form>
            <VBar $w={11}>
              <ArrowBox><Arrow dir="up" /></ArrowBox><VThumb $h={500} /><Spacer /><ArrowBox><Arrow dir="down" /></ArrowBox>
            </VBar>
          </PaneTop>
          <HBar><ArrowBox><Arrow dir="left" /></ArrowBox><HThumb $w={317} $both /><Spacer /><ArrowBox><Arrow dir="right" /></ArrowBox><ArrowBox /></HBar>
        </ScrollPane>
        <DialogButtons><Button $w={179} $h={15}>OK</Button><Button $w={179} $h={15}>Cancel</Button></DialogButtons>
      </Dialog>
    </Screen>
  </>
);

export default App;
